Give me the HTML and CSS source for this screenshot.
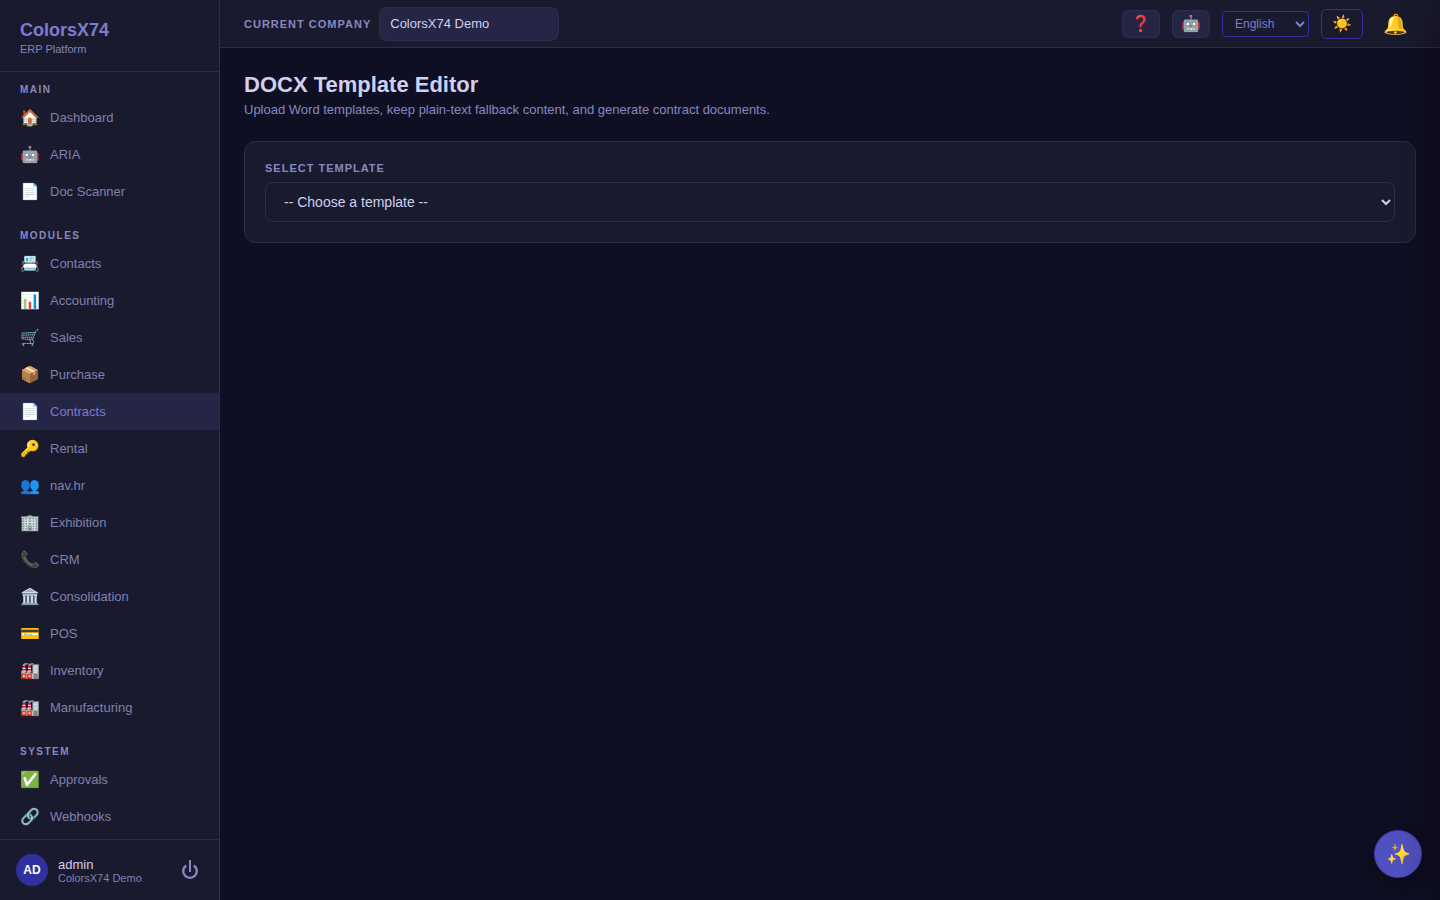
FILE: index.html
```
<!DOCTYPE html>
<html lang="en">
<head>
  <meta charset="UTF-8" />
  <meta name="viewport" content="width=device-width, initial-scale=1.0" />
  <title>DOCX Template Editor - ColorsX74</title>
  <link rel="stylesheet" href="styles.css">
</head>
<body>
  <div class="app">
    <aside class="sidebar">
      <div class="brand">
        <div class="brand-name">ColorsX74</div>
        <div class="brand-sub">ERP Platform</div>
      </div>

      <nav class="nav">
        <div class="nav-section">
          <div class="nav-title">Main</div>
          <a class="nav-item" href="#"><span class="nav-icon">🏠</span>Dashboard</a>
          <a class="nav-item" href="#"><span class="nav-icon">🤖</span>ARIA</a>
          <a class="nav-item" href="#"><span class="nav-icon">📄</span>Doc Scanner</a>
        </div>
        <div class="nav-section">
          <div class="nav-title">Modules</div>
          <a class="nav-item" href="#"><span class="nav-icon">📇</span>Contacts</a>
          <a class="nav-item" href="#"><span class="nav-icon">📊</span>Accounting</a>
          <a class="nav-item" href="#"><span class="nav-icon">🛒</span>Sales</a>
          <a class="nav-item" href="#"><span class="nav-icon">📦</span>Purchase</a>
          <a class="nav-item active" href="#"><span class="nav-icon">📄</span>Contracts</a>
          <a class="nav-item" href="#"><span class="nav-icon">🔑</span>Rental</a>
          <a class="nav-item" href="#"><span class="nav-icon">👥</span>nav.hr</a>
          <a class="nav-item" href="#"><span class="nav-icon">🏢</span>Exhibition</a>
          <a class="nav-item" href="#"><span class="nav-icon">📞</span>CRM</a>
          <a class="nav-item" href="#"><span class="nav-icon">🏛️</span>Consolidation</a>
          <a class="nav-item" href="#"><span class="nav-icon">💳</span>POS</a>
          <a class="nav-item" href="#"><span class="nav-icon">🏭</span>Inventory</a>
          <a class="nav-item" href="#"><span class="nav-icon">🏭</span>Manufacturing</a>
        </div>
        <div class="nav-section">
          <div class="nav-title">System</div>
          <a class="nav-item" href="#"><span class="nav-icon">✅</span>Approvals</a>
          <a class="nav-item" href="#"><span class="nav-icon">🔗</span>Webhooks</a>
        </div>
      </nav>

      <div class="user">
        <div class="avatar">AD</div>
        <div class="user-info">
          <div class="user-name">admin</div>
          <div class="user-company">ColorsX74 Demo</div>
        </div>
        <button class="logout" type="button" title="Logout">
          <svg width="18" height="20" viewBox="0 0 18 20" fill="none" stroke="currentColor" stroke-width="2.4">
            <path d="M5.2 5.4A6.8 6.8 0 1 0 12.8 5.4" />
            <path d="M9 0V12" stroke-width="2" />
          </svg>
        </button>
      </div>
    </aside>

    <div class="main">
      <header class="topbar">
        <label class="caption" for="company">Current Company</label>
        <input class="company" id="company" type="text" value="ColorsX74 Demo" readonly />

        <div class="tools">
          <button class="tool" type="button" aria-label="Help">❓</button>
          <button class="tool" type="button" aria-label="Assistant">🤖</button>
          <select class="lang" aria-label="Language">
            <option>English</option>
            <option>Indonesia</option>
          </select>
          <button class="theme" type="button" aria-label="Theme">☀️</button>
          <button class="bell" type="button" aria-label="Notifications">🔔</button>
        </div>
      </header>

      <main class="content">
        <h1>DOCX Template Editor</h1>
        <p class="subtitle">Upload Word templates, keep plain-text fallback content, and generate contract documents.</p>

        <section class="card">
          <label class="caption" for="template">Select Template</label>
          <select class="template" id="template">
            <option>-- Choose a template --</option>
          </select>
        </section>
      </main>
    </div>
  </div>

  <button class="fab" type="button" aria-label="AI assistant">✨</button>
  <!-- closed drawer, waits past the right edge -->
  <div class="drawer"></div>
</body>
</html>
```
FILE: styles.css
```
* { box-sizing: border-box; margin: 0; padding: 0; }
body { font-family: "Liberation Sans", Arial, sans-serif; background: #0f0f23; color: #d0d0f0; overflow: hidden; }
button, input, select { font-family: inherit; }
button { cursor: pointer; }
.app { display: flex; height: 100vh; }

/* sidebar */
.sidebar { width: 220px; flex-shrink: 0; display: flex; flex-direction: column; background: #1a1a2e; border-right: 1px solid #2d2d50; }
.brand { padding: 20px 20px 16px; border-bottom: 1px solid #2d2d50; }
.brand-name { font-size: 18px; line-height: 21px; font-weight: 700; color: #7c7cd0; }
.brand-sub { font-size: 11px; line-height: 12px; margin-top: 2px; color: #8484bc; }
.nav { flex: 1; min-height: 0; overflow: hidden; }
.nav-section { margin-bottom: 8px; }
.nav-title { padding: 12px 20px 4px; font-size: 10px; line-height: 11px; font-weight: 700; letter-spacing: 1.5px; text-transform: uppercase; color: #8888c0; }
.nav-item { display: flex; align-items: center; gap: 10px; height: 37px; padding: 0 20px; font-size: 13px; color: #8080b0; text-decoration: none; }
.nav-item.active { background: #252545; color: #8078d0; }
.nav-icon { width: 20px; font-size: 16px; text-align: center; }
.user { display: flex; align-items: center; gap: 10px; padding: 14px 16px; border-top: 1px solid #2d2d50; }
.avatar { display: flex; align-items: center; justify-content: center; width: 32px; height: 32px; border-radius: 50%; background: #3030a0; color: #fff; font-size: 12px; font-weight: 700; }
.user-info { flex: 1; }
.user-name { font-size: 13px; line-height: 15px; }
.user-company { font-size: 11px; line-height: 12px; color: #8080b0; }
.logout { padding: 4px; border: none; background: none; color: #8888c8; }
.logout svg { display: block; }

/* top bar */
.main { flex: 1; min-width: 0; }
.topbar { display: flex; align-items: center; gap: 8px; height: 48px; padding: 0 24px; background: #1a1a2e; border-bottom: 1px solid #2d2d50; }
.caption { font-size: 11px; line-height: 12px; font-weight: 700; letter-spacing: 1px; text-transform: uppercase; color: #8888c0; }
.company { width: 180px; height: 34px; padding: 0 10px; border: 1px solid #2d2d50; border-radius: 8px; background: #252545; color: #d0d0f0; font-size: 13px; }
.tools { display: flex; align-items: center; gap: 12px; margin-left: auto; }
.tool { width: 38px; height: 28px; border: 1px solid #2d2d50; border-radius: 6px; background: #252545; font-size: 16px; }
.lang { width: 87px; height: 26px; padding: 0 8px; border: 1px solid #3030a0; border-radius: 4px; background: #1a1a2e; color: #7c7cd0; font-size: 12px; }
.theme { width: 42px; height: 30px; border: 1px solid #3030a0; border-radius: 6px; background: none; font-size: 16px; }
.bell { padding: 4px 8px; border: none; background: none; font-size: 20px; }

/* page */
.content { padding: 24px; }
h1 { font-size: 22px; line-height: 25px; }
.subtitle { margin-top: 5px; font-size: 13px; line-height: 15px; color: #8888c0; }
.card { margin-top: 24px; padding: 20px; border: 1px solid #2d2d50; border-radius: 12px; background: #1a1a2e; }
.card .caption { display: block; margin-bottom: 8px; }
.template { display: block; width: 100%; height: 40px; padding: 0 14px; border: 1px solid #2d2d50; border-radius: 8px; background: #1a1a2e; color: #d0d0f0; font-size: 14px; }

.fab { position: fixed; right: 18px; bottom: 22px; width: 48px; height: 48px; border: 1px solid #3d3da8; border-radius: 50%; background: #5050c0; font-size: 20px; box-shadow: 0 4px 16px rgba(0, 0, 0, 0.4); }
.drawer { position: fixed; top: 0; left: 100%; width: 380px; height: 100vh; background: #1a1a2e; box-shadow: -8px 0 32px rgba(0, 0, 0, 0.3); }
```
